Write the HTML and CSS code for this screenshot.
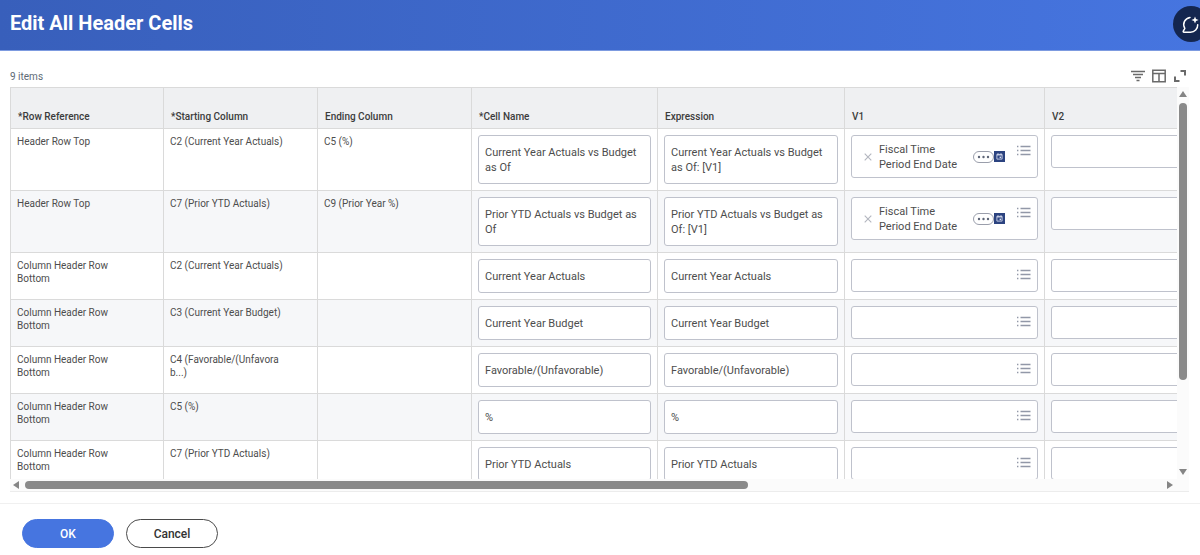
FILE: index.html
```html
<!DOCTYPE html>
<html lang="en">
	<head>
		<meta charset="UTF-8" />
		<meta name="viewport" content="width=device-width, initial-scale=1.0" />
		<title>Edit All Header Cells</title>
		<link rel="stylesheet" href="styles.css">
	</head>
	<body>
		<!-- shared icons -->
		<svg class="sprite" aria-hidden="true">
			<symbol id="icon-list" viewBox="0 0 14 12">
				<path d="M0 1.5h1.4M3.5 1.5h10M0 5.5h1.4M3.5 5.5h10M0 9.5h1.4M3.5 9.5h10" fill="none" stroke="#9298a8" stroke-width="1.3" />
			</symbol>
			<symbol id="icon-remove" viewBox="0 0 8 8">
				<path d="M0.7 0.7l6.6 6.6M7.3 0.7L0.7 7.3" fill="none" stroke="#b3b6bf" stroke-width="1.1" />
			</symbol>
			<symbol id="icon-related" viewBox="0 0 21 12">
				<rect x="0.5" y="0.5" width="20" height="11" rx="5.5" fill="#fff" stroke="#9a9eab" />
				<circle cx="6" cy="6" r="1.2" fill="#5e6577" />
				<circle cx="10.5" cy="6" r="1.2" fill="#5e6577" />
				<circle cx="15" cy="6" r="1.2" fill="#5e6577" />
			</symbol>
			<symbol id="icon-calendar" viewBox="0 0 11 11">
				<rect width="11" height="11" fill="#2c4380" />
				<path d="M2.9 3.4h5.2v4.7H2.9zM2.9 4h5.2M4 2.2v1.2M7 2.2v1.2" fill="none" stroke="#dfe5f5" stroke-width="0.8" />
				<rect x="5.6" y="5.6" width="1.5" height="1.5" fill="#dfe5f5" />
			</symbol>
		</svg>

		<header class="page-header">
			<h1>Edit All Header Cells</h1>
			<button class="assistant-btn" type="button" aria-label="Assistant">
				<svg width="36" height="36" viewBox="0 0 36 36">
					<path d="M17 11.4a7.2 7.2 0 0 0-5.2 10.9l-1.5 2.9c-.3.6 0 1.1.6 1.1h6.6a7.3 7.3 0 0 0 7.2-7.6" fill="none" stroke="#fff" stroke-width="1.5" stroke-linecap="round" stroke-linejoin="round" />
					<path d="M22 10.4l1 2.6 2.6 1-2.6 1-1 2.6-1-2.6-2.6-1 2.6-1z" fill="#fff" />
				</svg>
			</button>
		</header>

		<main class="content">
			<div class="toolbar">
				<span class="item-count">9 items</span>
				<div class="toolbar-actions">
					<button class="icon-btn" type="button" aria-label="Filter">
						<svg width="14" height="14" viewBox="0 0 14 14"><path d="M0 2.5h14M2 5.5h10M4 8.5h6M5.5 11.5h3" stroke="#6a6a6a" stroke-width="1.4" /></svg>
					</button>
					<button class="icon-btn" type="button" aria-label="Columns">
						<svg width="14" height="14" viewBox="0 0 14 14"><path d="M0.8 1.2h12.4v11.6H0.8zM0.8 4.5h12.4M7 4.5v8.3" fill="none" stroke="#6a6a6a" stroke-width="1.5" /></svg>
					</button>
					<button class="icon-btn" type="button" aria-label="Expand">
						<svg width="14" height="14" viewBox="0 0 14 14"><path d="M7.5 2H12v4.5M2 7.5V12h4.5" fill="none" stroke="#6a6a6a" stroke-width="2" /></svg>
					</button>
				</div>
			</div>

			<div class="grid-frame">
				<div class="grid-view">
					<table class="grid">
						<colgroup>
							<col class="col-ref" />
							<col class="col-column" />
							<col class="col-column" />
							<col class="col-name" />
							<col class="col-expression" />
							<col class="col-value" />
							<col class="col-value" />
						</colgroup>
						<thead>
							<tr>
								<th>*Row Reference</th>
								<th>*Starting Column</th>
								<th>Ending Column</th>
								<th>*Cell Name</th>
								<th>Expression</th>
								<th>V1</th>
								<th>V2</th>
							</tr>
						</thead>
						<tbody>
							<tr>
								<td>Header Row Top</td>
								<td>C2 (Current Year Actuals)</td>
								<td>C5 (%)</td>
								<td><textarea class="field tall" aria-label="Cell Name">Current Year Actuals vs Budget as Of</textarea></td>
								<td><textarea class="field tall" aria-label="Expression">Current Year Actuals vs Budget as Of: [V1]</textarea></td>
								<td>
									<div class="prompt">
										<button class="icon-btn" type="button" aria-label="Remove"><svg width="8" height="8"><use href="#icon-remove" /></svg></button>
										<span class="prompt-text">Fiscal Time Period End Date</span>
										<button class="icon-btn" type="button" aria-label="Related actions"><svg width="21" height="12"><use href="#icon-related" /></svg></button>
										<svg width="11" height="11"><use href="#icon-calendar" /></svg>
										<button class="icon-btn list-btn" type="button" aria-label="Options"><svg width="14" height="12"><use href="#icon-list" /></svg></button>
									</div>
								</td>
								<td><input class="field" type="text" aria-label="V2" /></td>
							</tr>
							<tr>
								<td>Header Row Top</td>
								<td>C7 (Prior YTD Actuals)</td>
								<td>C9 (Prior Year %)</td>
								<td><textarea class="field tall" aria-label="Cell Name">Prior YTD Actuals vs Budget as Of</textarea></td>
								<td><textarea class="field tall" aria-label="Expression">Prior YTD Actuals vs Budget as Of: [V1]</textarea></td>
								<td>
									<div class="prompt">
										<button class="icon-btn" type="button" aria-label="Remove"><svg width="8" height="8"><use href="#icon-remove" /></svg></button>
										<span class="prompt-text">Fiscal Time Period End Date</span>
										<button class="icon-btn" type="button" aria-label="Related actions"><svg width="21" height="12"><use href="#icon-related" /></svg></button>
										<svg width="11" height="11"><use href="#icon-calendar" /></svg>
										<button class="icon-btn list-btn" type="button" aria-label="Options"><svg width="14" height="12"><use href="#icon-list" /></svg></button>
									</div>
								</td>
								<td><input class="field" type="text" aria-label="V2" /></td>
							</tr>
							<tr>
								<td>Column Header Row<br />Bottom</td>
								<td>C2 (Current Year Actuals)</td>
								<td></td>
								<td><textarea class="field" aria-label="Cell Name">Current Year Actuals</textarea></td>
								<td><textarea class="field" aria-label="Expression">Current Year Actuals</textarea></td>
								<td>
									<div class="prompt empty">
										<input type="text" aria-label="V1" />
										<button class="icon-btn list-btn" type="button" aria-label="Options"><svg width="14" height="12"><use href="#icon-list" /></svg></button>
									</div>
								</td>
								<td><input class="field" type="text" aria-label="V2" /></td>
							</tr>
							<tr>
								<td>Column Header Row<br />Bottom</td>
								<td>C3 (Current Year Budget)</td>
								<td></td>
								<td><textarea class="field" aria-label="Cell Name">Current Year Budget</textarea></td>
								<td><textarea class="field" aria-label="Expression">Current Year Budget</textarea></td>
								<td>
									<div class="prompt empty">
										<input type="text" aria-label="V1" />
										<button class="icon-btn list-btn" type="button" aria-label="Options"><svg width="14" height="12"><use href="#icon-list" /></svg></button>
									</div>
								</td>
								<td><input class="field" type="text" aria-label="V2" /></td>
							</tr>
							<tr>
								<td>Column Header Row<br />Bottom</td>
								<td>C4 (Favorable/(Unfavora<br />b...)</td>
								<td></td>
								<td><textarea class="field" aria-label="Cell Name">Favorable/(Unfavorable)</textarea></td>
								<td><textarea class="field" aria-label="Expression">Favorable/(Unfavorable)</textarea></td>
								<td>
									<div class="prompt empty">
										<input type="text" aria-label="V1" />
										<button class="icon-btn list-btn" type="button" aria-label="Options"><svg width="14" height="12"><use href="#icon-list" /></svg></button>
									</div>
								</td>
								<td><input class="field" type="text" aria-label="V2" /></td>
							</tr>
							<tr>
								<td>Column Header Row<br />Bottom</td>
								<td>C5 (%)</td>
								<td></td>
								<td><textarea class="field" aria-label="Cell Name">%</textarea></td>
								<td><textarea class="field" aria-label="Expression">%</textarea></td>
								<td>
									<div class="prompt empty">
										<input type="text" aria-label="V1" />
										<button class="icon-btn list-btn" type="button" aria-label="Options"><svg width="14" height="12"><use href="#icon-list" /></svg></button>
									</div>
								</td>
								<td><input class="field" type="text" aria-label="V2" /></td>
							</tr>
							<tr>
								<td>Column Header Row<br />Bottom</td>
								<td>C7 (Prior YTD Actuals)</td>
								<td></td>
								<td><textarea class="field" aria-label="Cell Name">Prior YTD Actuals</textarea></td>
								<td><textarea class="field" aria-label="Expression">Prior YTD Actuals</textarea></td>
								<td>
									<div class="prompt empty">
										<input type="text" aria-label="V1" />
										<button class="icon-btn list-btn" type="button" aria-label="Options"><svg width="14" height="12"><use href="#icon-list" /></svg></button>
									</div>
								</td>
								<td><input class="field" type="text" aria-label="V2" /></td>
							</tr>
						</tbody>
					</table>
				</div>
				<div class="scrollbar vertical">
					<svg width="8" height="6" viewBox="0 0 8 6"><path d="M4 0l4 6H0z" fill="#858585" /></svg>
					<div class="track"><div class="thumb"></div></div>
					<svg width="8" height="6" viewBox="0 0 8 6"><path d="M0 0h8L4 6z" fill="#858585" /></svg>
				</div>
				<div class="scrollbar horizontal">
					<svg width="6" height="8" viewBox="0 0 6 8"><path d="M6 0v8L0 4z" fill="#858585" /></svg>
					<div class="track"><div class="thumb"></div></div>
					<svg width="6" height="8" viewBox="0 0 6 8"><path d="M0 0l6 4-6 4z" fill="#858585" /></svg>
				</div>
			</div>
		</main>

		<footer class="page-footer">
			<button class="btn primary" type="button">OK</button>
			<button class="btn" type="button">Cancel</button>
		</footer>
	</body>
</html>
```
FILE: styles.css
```css
* {
	box-sizing: border-box;
}

body {
	font-family: Roboto, "Liberation Sans", sans-serif;
	margin: 0;
	height: 100vh;
	display: flex;
	flex-direction: column;
	overflow: hidden;
	background: #fff;
	color: #4d4d4d;
}

button,
input,
textarea {
	font-family: inherit;
	color: inherit;
}

svg {
	display: block;
	flex: none;
}

.sprite {
	position: absolute;
	width: 0;
	height: 0;
}

.page-header {
	position: relative;
	flex: none;
	height: 51px;
	padding: 11px 10px;
	background: linear-gradient(to right, #385fbb, #4675e0);
	border-bottom: 1px solid #7d9be0;
	color: #fff;
}

.page-header h1 {
	margin: 0;
	font-size: 20px;
	line-height: 24px;
	font-weight: 700;
}

.assistant-btn {
	position: absolute;
	top: 6px;
	right: -9px;
	padding: 0;
	border: none;
	border-radius: 50%;
	background: #14264f;
	cursor: pointer;
}

.content {
	flex: 1;
	min-height: 0;
	display: flex;
	flex-direction: column;
	padding: 15px 11px 11px 10px;
}

.toolbar {
	display: flex;
	justify-content: space-between;
	align-items: center;
	height: 21px;
	flex: none;
	padding-right: 2px;
}

.item-count {
	font-size: 10px;
	color: #5e6a75;
}

.toolbar-actions {
	display: flex;
	gap: 7px;
}

.icon-btn {
	border: none;
	background: none;
	padding: 0;
	cursor: pointer;
}

.toolbar .icon-btn {
	padding-bottom: 2px;
}

.grid-frame {
	flex: 1;
	min-height: 0;
	display: grid;
	grid-template-columns: 1fr 12px;
	grid-template-rows: 1fr 12px;
	background: #fbfbfb;
	border-bottom: 1px solid #ececec;
}

.grid-view {
	overflow: hidden;
	background: #fff;
}

.grid {
	table-layout: fixed;
	width: 1235px;
	border-collapse: separate;
	border-spacing: 0;
	border-top: 1px solid #dadada;
	border-left: 1px solid #dadada;
	font-size: 10px;
	line-height: 13px;
}

.col-ref {
	width: 153px;
}

.col-column {
	width: 154px;
}

.col-name {
	width: 186px;
}

.col-expression {
	width: 187px;
}

.col-value {
	width: 200px;
}

.grid th,
.grid td {
	padding: 6px;
	border-right: 1px solid #dadada;
	border-bottom: 1px solid #dadada;
	text-align: left;
	vertical-align: top;
}

.grid th {
	height: 41px;
	padding: 5px 7px;
	background: #eff0f2;
	vertical-align: bottom;
	font-weight: 500;
	color: #3c3c3c;
}

.grid tbody tr:nth-child(even) {
	background: #f6f7f9;
}

.field {
	display: block;
	width: 100%;
	height: 34px;
	margin: 0;
	padding: 9px 6px 7px;
	border: 1px solid #bfc2cc;
	border-radius: 3px;
	background: #fff;
	font-size: 11px;
	line-height: 15px;
	resize: none;
	overflow: hidden;
}

input.field {
	height: 33px;
}

.field.tall {
	height: 49px;
}

.prompt {
	display: flex;
	align-items: center;
	height: 43px;
	padding: 0 6px 0 12px;
	border: 1px solid #bfc2cc;
	border-radius: 3px;
	background: #fff;
	font-size: 11px;
	line-height: 15px;
}

.prompt-text {
	width: 91px;
	margin-right: 10px;
	padding-left: 7px;
	flex: none;
}

.prompt.empty {
	height: 33px;
	padding-left: 6px;
}

.prompt input {
	flex: 1;
	min-width: 0;
	border: none;
	background: none;
	font-size: 11px;
}

.list-btn {
	align-self: flex-start;
	margin: 9px 0 0 auto;
}

.scrollbar {
	display: flex;
	align-items: center;
	justify-content: space-between;
	gap: 6px;
}

.scrollbar.vertical {
	flex-direction: column;
	padding: 4px 0;
}

.scrollbar.horizontal {
	padding: 0 4px 0 3px;
}

.track {
	flex: 1;
}

.thumb {
	border-radius: 4px;
	background: #8a8a8a;
}

.vertical .thumb {
	width: 8px;
	height: 77%;
}

.horizontal .thumb {
	width: calc(100% * 7 / 11);
	height: 8px;
}

.page-footer {
	flex: none;
	display: flex;
	gap: 12px;
	padding: 15px 22px 7px;
	border-top: 1px solid #f0f0f0;
}

.btn {
	width: 92px;
	height: 29px;
	border: 1px solid #4a4a4a;
	border-radius: 15px;
	background: #fff;
	color: #333;
	font-size: 12px;
	font-weight: 500;
	cursor: pointer;
}

.btn.primary {
	border-color: #4675e0;
	background: #4675e0;
	color: #fff;
}
```
